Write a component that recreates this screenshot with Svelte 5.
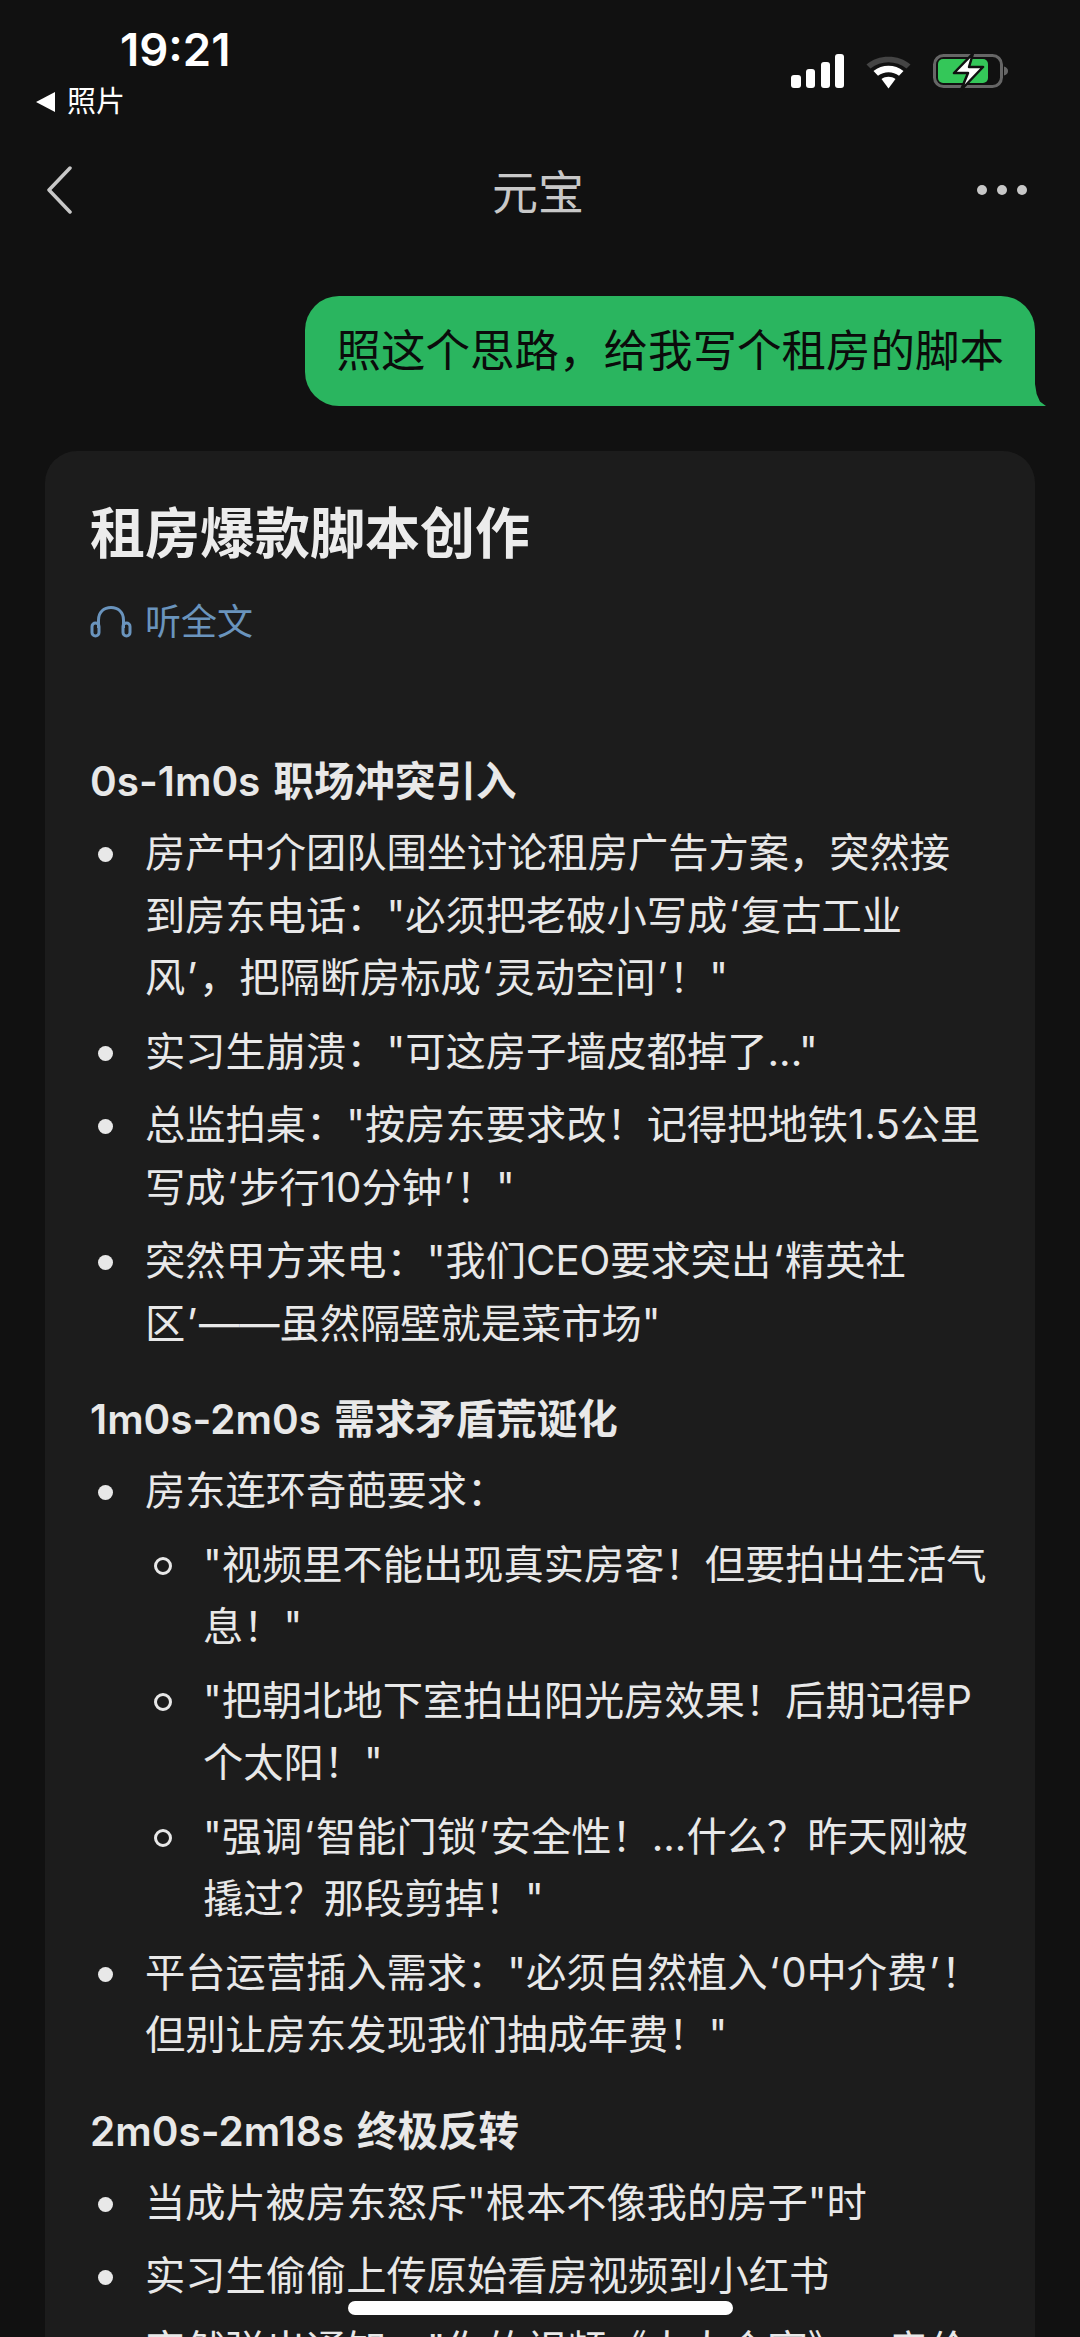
<script>
  const sections = [
    {
      title: '0s-1m0s 职场冲突引入',
      items: [
        { text: '房产中介团队围坐讨论租房广告方案，突然接到房东电话："必须把老破小写成‘复古工业\n风’，把隔断房标成‘灵动空间’！"' },
        { text: '实习生崩溃："可这房子墙皮都掉了..."' },
        { text: '总监拍桌："按房东要求改！记得把地铁1.5公里写成‘步行10分钟’！"' },
        { text: '突然甲方来电："我们CEO要求突出‘精英社区’——虽然隔壁就是菜市场"' }
      ]
    },
    {
      title: '1m0s-2m0s 需求矛盾荒诞化',
      items: [
        {
          text: '房东连环奇葩要求：',
          sub: [
            '"视频里不能出现真实房客！但要拍出生活气息！"',
            '"把朝北地下室拍出阳光房效果！后期记得P个太阳！"',
            '"强调‘智能门锁’安全性！...什么？昨天刚被撬过？那段剪掉！"'
          ]
        },
        { text: '平台运营插入需求："必须自然植入‘0中介费’！但别让房东发现我们抽成年费！"' }
      ]
    },
    {
      title: '2m0s-2m18s 终极反转',
      items: [
        { text: '当成片被房东怒斥"根本不像我的房子"时' },
        { text: '实习生偷偷上传原始看房视频到小红书' },
        { text: '突然弹出通知："你的视频《大人合室》，房价上涨' }
      ]
    }
  ];
  const pieces = (text) => text.split(/([‘’])/);
  const isQuote = (p) => p === '‘' || p === '’';
</script>

{#snippet rich(text)}{#each pieces(text) as p}{#if isQuote(p)}<span class="q">{p}</span>{:else}{p}{/if}{/each}{/snippet}

<div class="page">
  <header class="status">
    <div class="status-left">
      <div class="time">19:21</div>
      <div class="crumb"><span class="tri"></span>照片</div>
    </div>
    <svg class="status-icons" width="220" height="40" viewBox="0 0 220 40" aria-hidden="true">
      <g fill="#fff">
        <rect x="3" y="22" width="10" height="13" rx="3" />
        <rect x="18" y="16" width="9" height="19" rx="3" />
        <rect x="33" y="9" width="9" height="26" rx="3" />
        <rect x="47" y="1" width="9" height="34" rx="3" />
      </g>
      <path d="M78.5 11.5 C90 1 111 1 122.5 11.5 L118.5 15.5 C108 7 93 7 82.5 15.5 Z" fill="#444" />
      <path d="M85.5 18 C94 11 107 11 115.5 18 L111 22.8 C105 18 96 18 90 22.8 Z" fill="#fff" />
      <path d="M93.5 26 C97.5 23 103.5 23 107.5 26 L100.5 35.5 Z" fill="#fff" />
      <rect x="146.5" y="2.5" width="67" height="31" rx="9" fill="none" stroke="#666" stroke-width="3" />
      <rect x="150" y="6" width="50" height="24" rx="5" fill="#34c759" />
      <path d="M216 13.5 C219 14.5 220 16 220 18 C220 20 219 21.5 216 22.5 Z" fill="#666" />
      <path d="M185 0.5 L166 20 L180 20 L173 37 L195 14 L181 14 Z" fill="#fff" stroke="#111" stroke-width="2.5" stroke-linejoin="round" />
    </svg>
  </header>

  <nav class="nav">
    <svg class="back" width="26" height="48" viewBox="0 0 26 48" aria-hidden="true">
      <path d="M24 2 L3 24 L24 46" fill="none" stroke="#c8c8c8" stroke-width="3.5" stroke-linecap="round" stroke-linejoin="round" />
    </svg>
    <div class="nav-title">元宝</div>
    <div class="dots"><i></i><i></i><i></i></div>
  </nav>

  <div class="bubble-row">
    <div class="bubble">照这个思路，给我写个租房的脚本</div>
  </div>

  <main class="card">
    <h1>租房爆款脚本创作</h1>
    <div class="listen">
      <svg width="42" height="32" viewBox="0 0 42 32" aria-hidden="true">
        <path d="M8.5 22 V14 C8.5 6 14 1.5 21 1.5 C28 1.5 33.5 6 33.5 14 V22" fill="none" stroke="#6a94bd" stroke-width="3" />
        <rect x="2" y="17" width="7" height="13" rx="3.5" fill="none" stroke="#6a94bd" stroke-width="3" />
        <rect x="33" y="17" width="7" height="13" rx="3.5" fill="none" stroke="#6a94bd" stroke-width="3" />
      </svg>
      <span>听全文</span>
    </div>

    {#each sections as s}
      <section>
        <h2>{s.title}</h2>
        <ul>
          {#each s.items as item}
            <li>
              {@render rich(item.text)}
              {#if item.sub}
                <ul class="sub">
                  {#each item.sub as t}
                    <li>{@render rich(t)}</li>
                  {/each}
                </ul>
              {/if}
            </li>
          {/each}
        </ul>
      </section>
    {/each}
  </main>

  <div class="home"></div>
</div>

<style>
  :global(body) {
    margin: 0;
    background: #111111;
  }
  .page {
    position: relative;
    height: 2337px;
    overflow: hidden;
    background: #111111;
    color: #e8e8e8;
    font-family: Inter, "Noto Sans CJK SC", sans-serif;
    text-spacing-trim: space-all;
  }
  .status {
    display: flex;
    justify-content: space-between;
    align-items: flex-start;
    height: 130px;
    box-sizing: border-box;
    padding: 24px 66px 0 36px;
    color: #fff;
  }
  .time {
    font-size: 45.5px;
    font-weight: 600;
    line-height: 52px;
    margin-left: 84px;
  }
  .crumb {
    display: flex;
    align-items: center;
    font-size: 29px;
    line-height: 34px;
    margin-top: 9px;
  }
  .tri {
    width: 0;
    height: 0;
    border-style: solid;
    border-width: 10px 19px 10px 0;
    border-color: transparent #fff transparent transparent;
    margin-right: 12px;
  }
  .status-icons {
    margin-top: 29px;
    margin-right: 6px;
  }
  .nav {
    display: grid;
    grid-template-columns: 1fr auto 1fr;
    align-items: center;
    height: 120px;
    padding: 0 53px 0 49px;
    color: #c8c8c8;
  }
  .back {
    display: block;
    margin-left: -3px;
  }
  .nav-title {
    font-size: 46px;
    line-height: 60px;
    margin-top: 4px;
    text-align: center;
  }
  .dots {
    display: flex;
    justify-content: flex-end;
    gap: 10px;
  }
  .dots i {
    display: block;
    width: 10px;
    height: 10px;
    border-radius: 50%;
    background: #c8c8c8;
  }
  .bubble-row {
    display: flex;
    justify-content: flex-end;
    padding: 46px 45px 0 0;
  }
  .bubble {
    position: relative;
    background: #2ab55f;
    color: #0b0b0b;
    font-size: 44.5px;
    line-height: 110px;
    padding: 0 31px;
    border-radius: 34px 34px 0 34px;
  }
  .bubble::after {
    content: "";
    position: absolute;
    right: -11px;
    bottom: 0;
    width: 11px;
    height: 22px;
    background: #2ab55f;
    clip-path: polygon(0 0, 15% 45%, 45% 80%, 100% 100%, 0 100%);
  }
  .card {
    margin: 45px 45px 0;
    padding: 42px 45px 0;
    background: #1c1c1c;
    border-radius: 32px 32px 0 0;
  }
  h1 {
    margin: 0;
    font-size: 55px;
    line-height: 80px;
    font-weight: 700;
    color: #ececec;
  }
  .listen {
    display: flex;
    align-items: center;
    gap: 13px;
    margin-top: 19px;
    font-size: 36px;
    line-height: 60px;
    color: #6a94bd;
  }
  section {
    margin-top: 34px;
  }
  .listen + section {
    margin-top: 99px;
  }
  h2 {
    margin: 0;
    font-size: 40.5px;
    line-height: 62px;
    font-weight: 600;
    color: #e8e8e8;
    word-spacing: 3px;
  }
  ul {
    margin: 9px 0 0;
    padding-left: 55px;
    list-style: none;
  }
  li {
    position: relative;
    font-size: 40.25px;
    line-height: 62.5px;
    margin-bottom: 11px;
    white-space: pre-line;
  }
  .q {
    padding: 0 1.6px;
  }
  li::before {
    content: "";
    position: absolute;
    left: -47px;
    top: 25px;
    width: 15px;
    height: 15px;
    border-radius: 50%;
    background: #e8e8e8;
  }
  .sub {
    margin: 11px 0 0;
    padding-left: 58px;
  }
  .sub li::before {
    left: -49px;
    top: 23px;
    width: 18px;
    height: 18px;
    box-sizing: border-box;
    background: transparent;
    border: 3px solid #e8e8e8;
  }
  .home {
    position: absolute;
    left: 348px;
    top: 2301px;
    width: 385px;
    height: 14px;
    border-radius: 7px;
    background: #fff;
  }
</style>
